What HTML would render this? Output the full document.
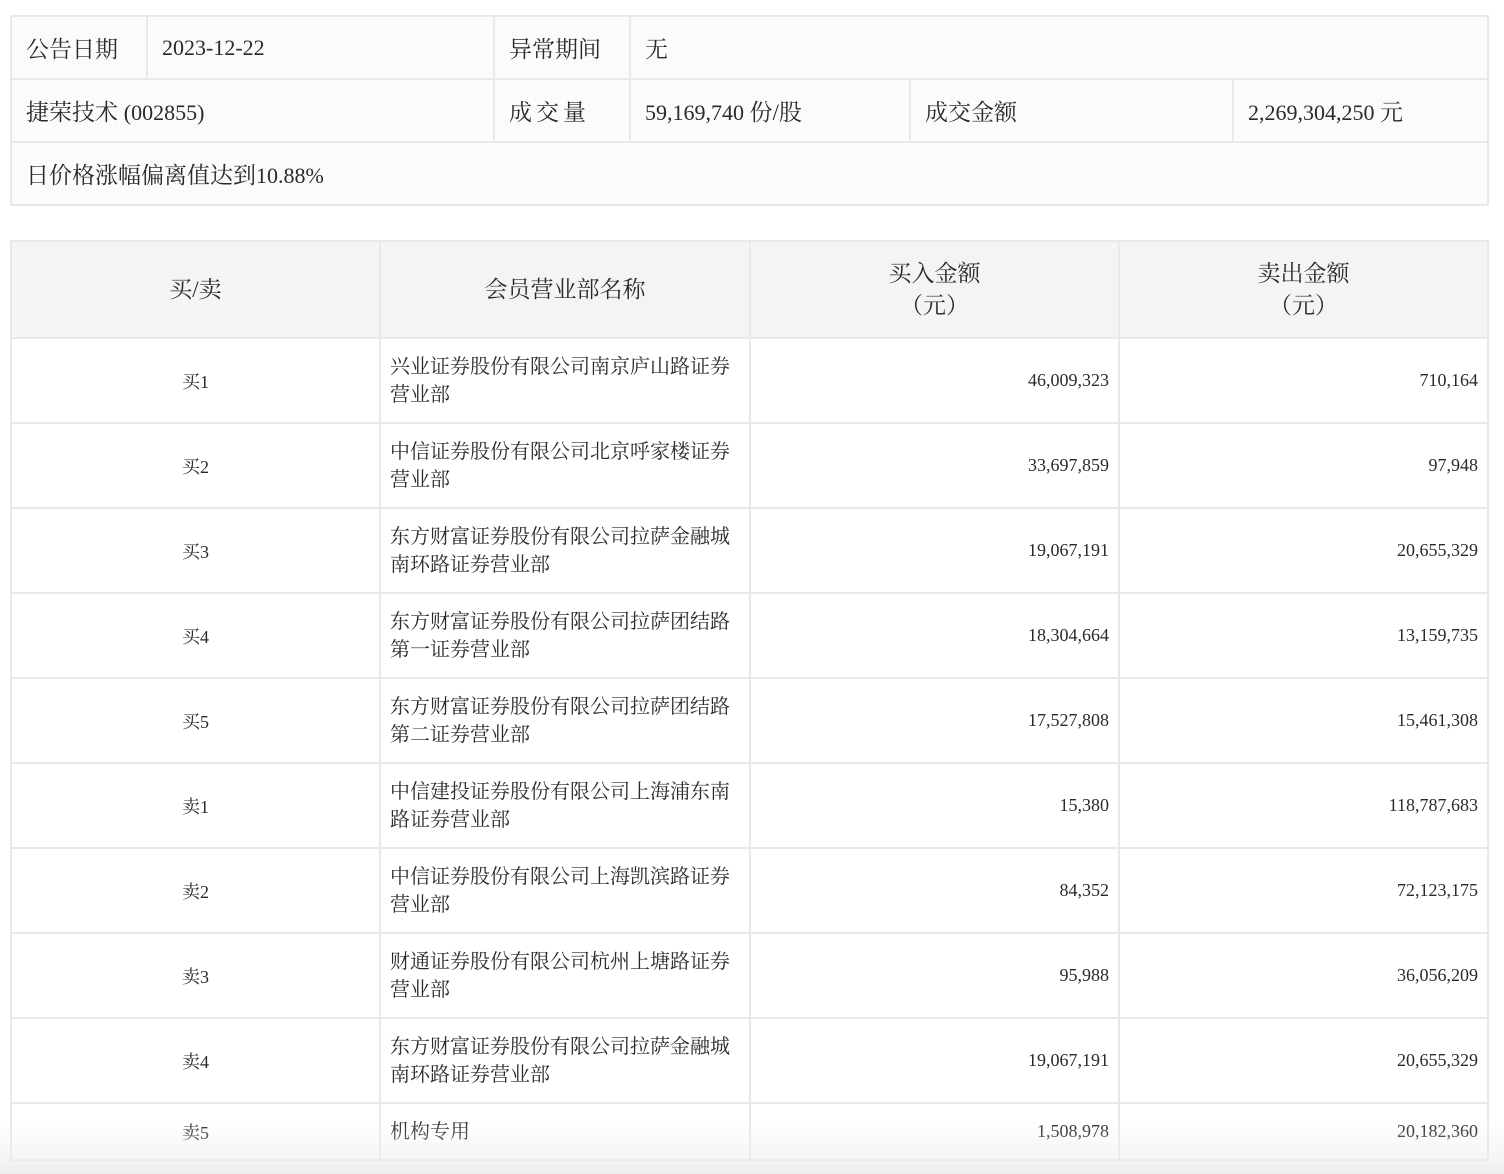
<!DOCTYPE html>
<html><head><meta charset="utf-8"><style>
body{margin:0;background:#fff;width:1504px;height:1174px;position:relative;overflow:hidden;font-family:"Liberation Serif","Noto Serif CJK SC",serif;color:#2a2a2a}
table{position:absolute;left:10px;border-collapse:collapse;table-layout:fixed;width:1477px}
td,th{border:2px solid #e9e9e9;padding:0;font-weight:normal}
#t1{top:15px;background:#fbfbf9}
#t1 td{height:61px;font-size:22px;padding-left:14px;vertical-align:middle}
#t1 .l{font-size:23px}
#t2{top:240px}
#t2 th{background:#f4f4f4;height:95px;font-size:23px;line-height:32px}
#t2 td{height:83px;font-size:18px;vertical-align:middle}
#t2 td.c{text-align:center}
#t2 td.n{font-size:20px;line-height:28px;padding:0 6px 0 9px}
#t2 td.r{text-align:right;padding-right:9px}
#t2 tr.last td{height:55px}
.fade{position:absolute;left:0;top:1120px;width:1504px;height:54px;background:linear-gradient(rgba(238,238,238,0),rgba(236,236,236,0.5) 70%,rgba(236,236,236,1));pointer-events:none}
</style></head><body>
<table id="t1">
<colgroup><col style="width:136px"><col style="width:347px"><col style="width:136px"><col style="width:280px"><col style="width:323px"><col style="width:255px"></colgroup>
<tr><td class="l">公告日期</td><td>2023-12-22</td><td class="l">异常期间</td><td colspan="3" class="l">无</td></tr>
<tr><td colspan="2" class="l">捷荣技术 <span style="font-size:22px">(002855)</span></td><td class="l" style="letter-spacing:4px">成交量</td><td>59,169,740 <span class="l">份/股</span></td><td class="l">成交金额</td><td>2,269,304,250 <span class="l">元</span></td></tr>
<tr><td colspan="6" class="l">日价格涨幅偏离值达到<span style="font-size:22px">10.88%</span></td></tr>
</table>
<table id="t2">
<colgroup><col style="width:369px"><col style="width:370px"><col style="width:369px"><col style="width:369px"></colgroup>
<tr><th>买/卖</th><th>会员营业部名称</th><th>买入金额<br>（元）</th><th>卖出金额<br>（元）</th></tr>
<tr><td class="c">买1</td><td class="n">兴业证券股份有限公司南京庐山路证券营业部</td><td class="r">46,009,323</td><td class="r">710,164</td></tr>
<tr><td class="c">买2</td><td class="n">中信证券股份有限公司北京呼家楼证券营业部</td><td class="r">33,697,859</td><td class="r">97,948</td></tr>
<tr><td class="c">买3</td><td class="n">东方财富证券股份有限公司拉萨金融城南环路证券营业部</td><td class="r">19,067,191</td><td class="r">20,655,329</td></tr>
<tr><td class="c">买4</td><td class="n">东方财富证券股份有限公司拉萨团结路第一证券营业部</td><td class="r">18,304,664</td><td class="r">13,159,735</td></tr>
<tr><td class="c">买5</td><td class="n">东方财富证券股份有限公司拉萨团结路第二证券营业部</td><td class="r">17,527,808</td><td class="r">15,461,308</td></tr>
<tr><td class="c">卖1</td><td class="n">中信建投证券股份有限公司上海浦东南路证券营业部</td><td class="r">15,380</td><td class="r">118,787,683</td></tr>
<tr><td class="c">卖2</td><td class="n">中信证券股份有限公司上海凯滨路证券营业部</td><td class="r">84,352</td><td class="r">72,123,175</td></tr>
<tr><td class="c">卖3</td><td class="n">财通证券股份有限公司杭州上塘路证券营业部</td><td class="r">95,988</td><td class="r">36,056,209</td></tr>
<tr><td class="c">卖4</td><td class="n">东方财富证券股份有限公司拉萨金融城南环路证券营业部</td><td class="r">19,067,191</td><td class="r">20,655,329</td></tr>
<tr class="last"><td class="c">卖5</td><td class="n">机构专用</td><td class="r">1,508,978</td><td class="r">20,182,360</td></tr>
</table>
<div class="fade"></div>
</body></html>
